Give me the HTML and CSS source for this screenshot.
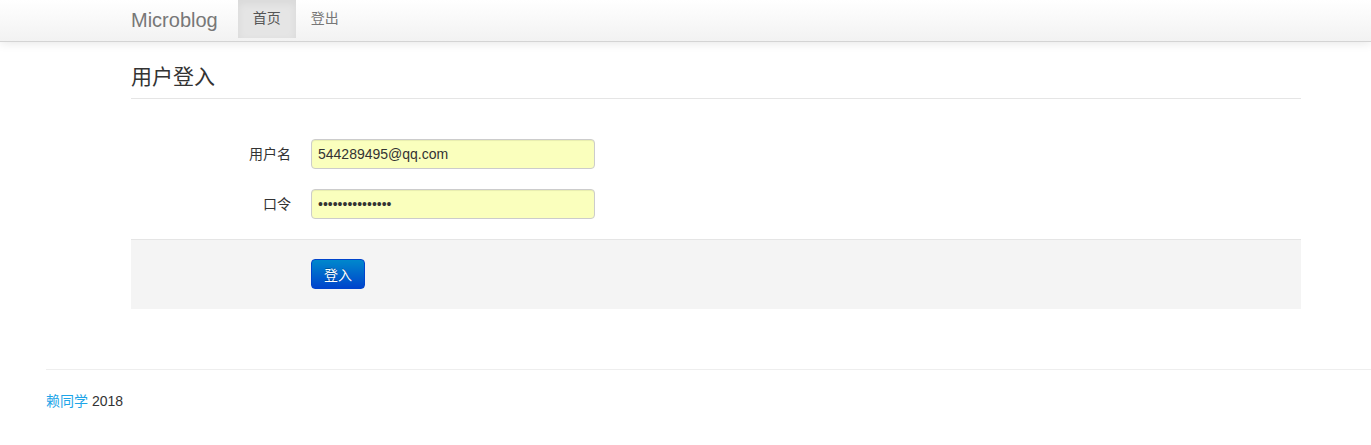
FILE: index.html
```html
<!DOCTYPE html>
<html lang="zh">
<head>
<meta charset="utf-8">
<title>Microblog</title>
<link rel="stylesheet" href="styles.css">
</head>
<body>
<div class="navbar">
  <div class="nav-inner">
    <a class="brand" href="#">Microblog</a>
    <ul class="nav">
      <li class="active"><a href="#">首页</a></li>
      <li><a href="#">登出</a></li>
    </ul>
  </div>
</div>
<div class="container">
  <div class="page-header"><h1>用户登入</h1></div>
  <form class="form-horizontal">
    <div class="control-group">
      <label class="control-label">用户名</label>
      <input class="input" type="text" value="544289495@qq.com">
    </div>
    <div class="control-group">
      <label class="control-label">口令</label>
      <input class="input" type="password" value="123456789012345">
    </div>
    <div class="form-actions">
      <button class="btn-primary" type="button">登入</button>
    </div>
  </form>
</div>
<footer class="footer">
  <p><a href="#">赖同学</a> 2018</p>
</footer>
</body>
</html>
```
FILE: styles.css
```css
* { box-sizing: border-box; }
body {
  margin: 0;
  font-family: "Liberation Sans", Arial, "Noto Sans CJK SC", sans-serif;
  font-size: 14px;
  line-height: 20px;
  color: #333;
  background: #fff;
}
a { text-decoration: none; }
.navbar {
  height: 42px;
  background: linear-gradient(to bottom, #ffffff, #f2f2f2);
  border-bottom: 1px solid #d4d4d4;
  box-shadow: 0 1px 10px rgba(0,0,0,0.1);
}
.nav-inner {
  display: flex;
  align-items: flex-start;
  padding-left: 131px;
}
.brand {
  font-size: 20px;
  line-height: 20px;
  color: #777;
  padding: 10px 20px 10px 0;
}
.nav {
  list-style: none;
  margin: 0;
  padding: 0;
  display: flex;
}
.nav li a {
  display: block;
  padding: 8px 15px 10px;
  height: 38px;
  color: #777;
  font-size: 14px;
}
.nav li.active a {
  background: #e5e5e5;
  color: #555;
  box-shadow: inset 0 3px 8px rgba(0,0,0,0.06);
}
.container {
  margin-left: 131px;
  width: 1170px;
}
.page-header {
  margin: 21px 0 40px;
  padding-bottom: 7px;
  border-bottom: 1px solid #e5e5e5;
}
.page-header h1 {
  margin: 0;
  font-size: 21px;
  line-height: 28px;
  font-weight: normal;
  color: #333;
}
.control-group {
  display: flex;
  align-items: center;
  margin-bottom: 20px;
}
.control-label {
  width: 160px;
  text-align: right;
  padding-right: 20px;
  font-size: 14px;
  box-sizing: content-box;
}
.input {
  width: 284px;
  height: 30px;
  padding: 4px 6px;
  font-family: "Liberation Sans", Arial, sans-serif;
  font-size: 14px;
  color: #333;
  background: #faffbd;
  border: 1px solid #ccc;
  border-radius: 4px;
  box-shadow: inset 0 1px 1px rgba(0,0,0,0.075);
}
.form-actions {
  padding: 19px 0 20px 180px;
  background: #f4f4f4;
  border-top: 1px solid #e5e5e5;
  height: 70px;
}
.btn-primary {
  width: 54px;
  height: 30px;
  padding: 0;
  font-family: "Liberation Sans", Arial, "Noto Sans CJK SC", sans-serif;
  font-size: 14px;
  color: #fff;
  background: linear-gradient(to bottom, #0088cc, #0044cc);
  border: 1px solid #0044cc;
  border-radius: 4px;
  text-shadow: 0 -1px 0 rgba(0,0,0,0.25);
}
.footer {
  margin: 60px 0 0 46px;
  border-top: 1px solid #eee;
  padding-top: 21px;
}
.footer p { margin: 0; font-size: 14px; }
.footer a { color: #1ea5e8; }
```
